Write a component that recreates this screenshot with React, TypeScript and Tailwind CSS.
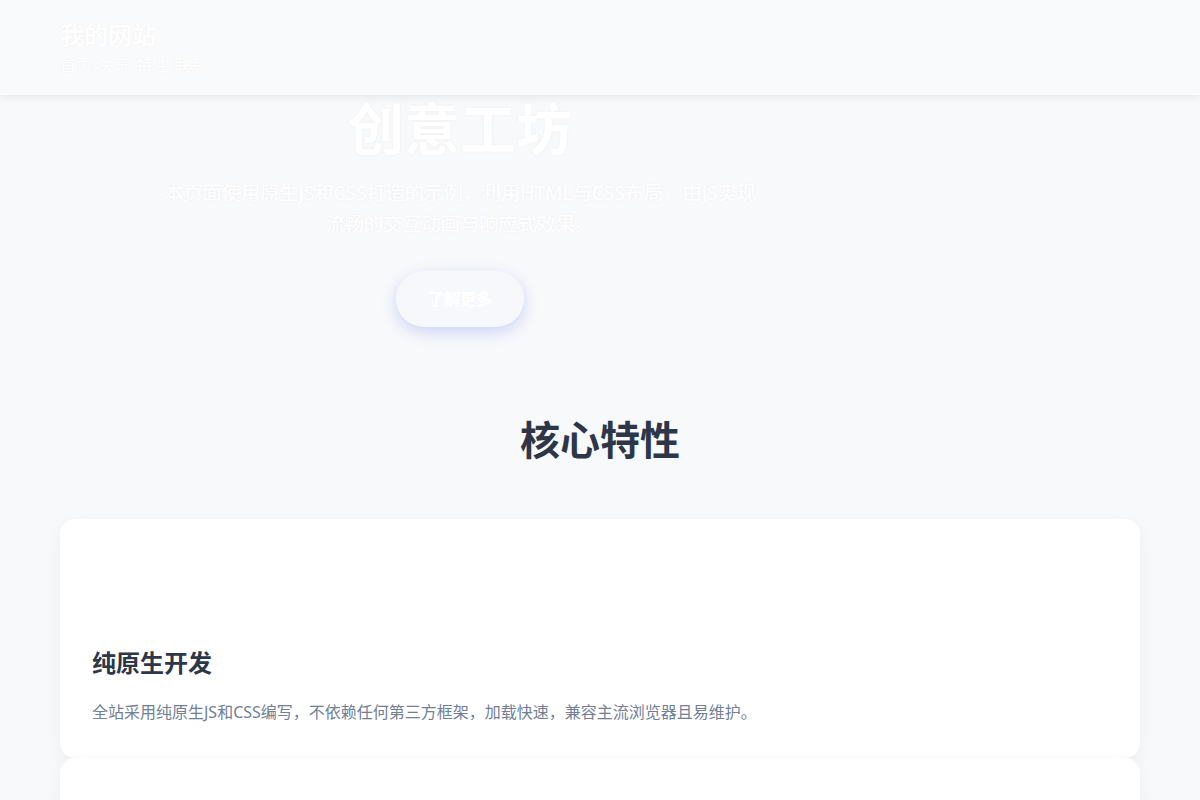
const navItems = ["首页", "关于", "特性", "联系"];

const features = [
  {
    title: "纯原生开发",
    desc: "全站采用纯原生JS和CSS编写，不依赖任何第三方框架，加载快速，兼容主流浏览器且易维护。",
  },
  {
    title: "响应式布局",
    desc: "页面在桌面、平板和手机上都能自适应显示，保证每一位访问者都获得一致的浏览体验。",
  },
];

export default function App() {
  return (
    <div className="min-h-screen bg-[#f8f9fb] font-['Noto_Sans','Noto_Sans_CJK_SC',sans-serif]">
      {/* Header */}
      <header className="relative z-10 bg-[#f9fafb] px-[60px] pt-[17px] pb-[18px] shadow-[0_2px_10px_rgba(0,0,0,0.08)]">
        <div className="text-[24px] font-bold leading-[36px] text-white [text-shadow:0_0_2px_rgba(0,0,0,0.06)]">
          我的网站
        </div>
        <nav className="flex gap-[6px] text-[16px] leading-[24px] text-white [text-shadow:0_0_2px_rgba(0,0,0,0.06)]">
          {navItems.map((item) => (
            <a key={item} href="#">
              {item}
            </a>
          ))}
        </nav>
      </header>

      {/* Hero */}
      <section className="px-[60px]">
        <div className="max-w-[800px] text-center text-white [text-shadow:0_0_3px_rgba(0,0,0,0.05)]">
          <h1 className="text-[56px] font-bold leading-[67px]">创意工坊</h1>
          <p className="mx-auto mt-[16px] max-w-[600px] text-[19.2px] leading-[30.7px]">
            本页面使用原生JS和CSS打造的示例，利用HTML与CSS布局，由JS实现
            <br />
            流畅的交互动画与响应式效果。
          </p>
          <button className="mt-[32px] rounded-full bg-[#f7f8fc] px-8 py-4 text-[16px] font-semibold leading-[24px] text-white shadow-[0_5px_15px_rgba(102,126,234,0.3)]">
            了解更多
          </button>
        </div>
      </section>

      {/* Features */}
      <section className="px-[60px] pt-[89px]">
        <h2 className="text-center text-[40px] font-bold leading-[48px] text-[#2d3748]">核心特性</h2>
        <div className="mt-[55px] flex flex-col">
          {features.map((f) => (
            <div
              key={f.title}
              className="rounded-[15px] bg-white px-8 pt-8 pb-[34px] shadow-[0_5px_15px_rgba(0,0,0,0.05)]"
            >
              <div className="h-[94px]" />
              <h3 className="text-[24px] font-semibold leading-[36px] text-[#2d3748]">{f.title}</h3>
              <p className="mt-[19px] text-[16px] leading-[24px] text-[#718096]">{f.desc}</p>
            </div>
          ))}
        </div>
      </section>
    </div>
  );
}
